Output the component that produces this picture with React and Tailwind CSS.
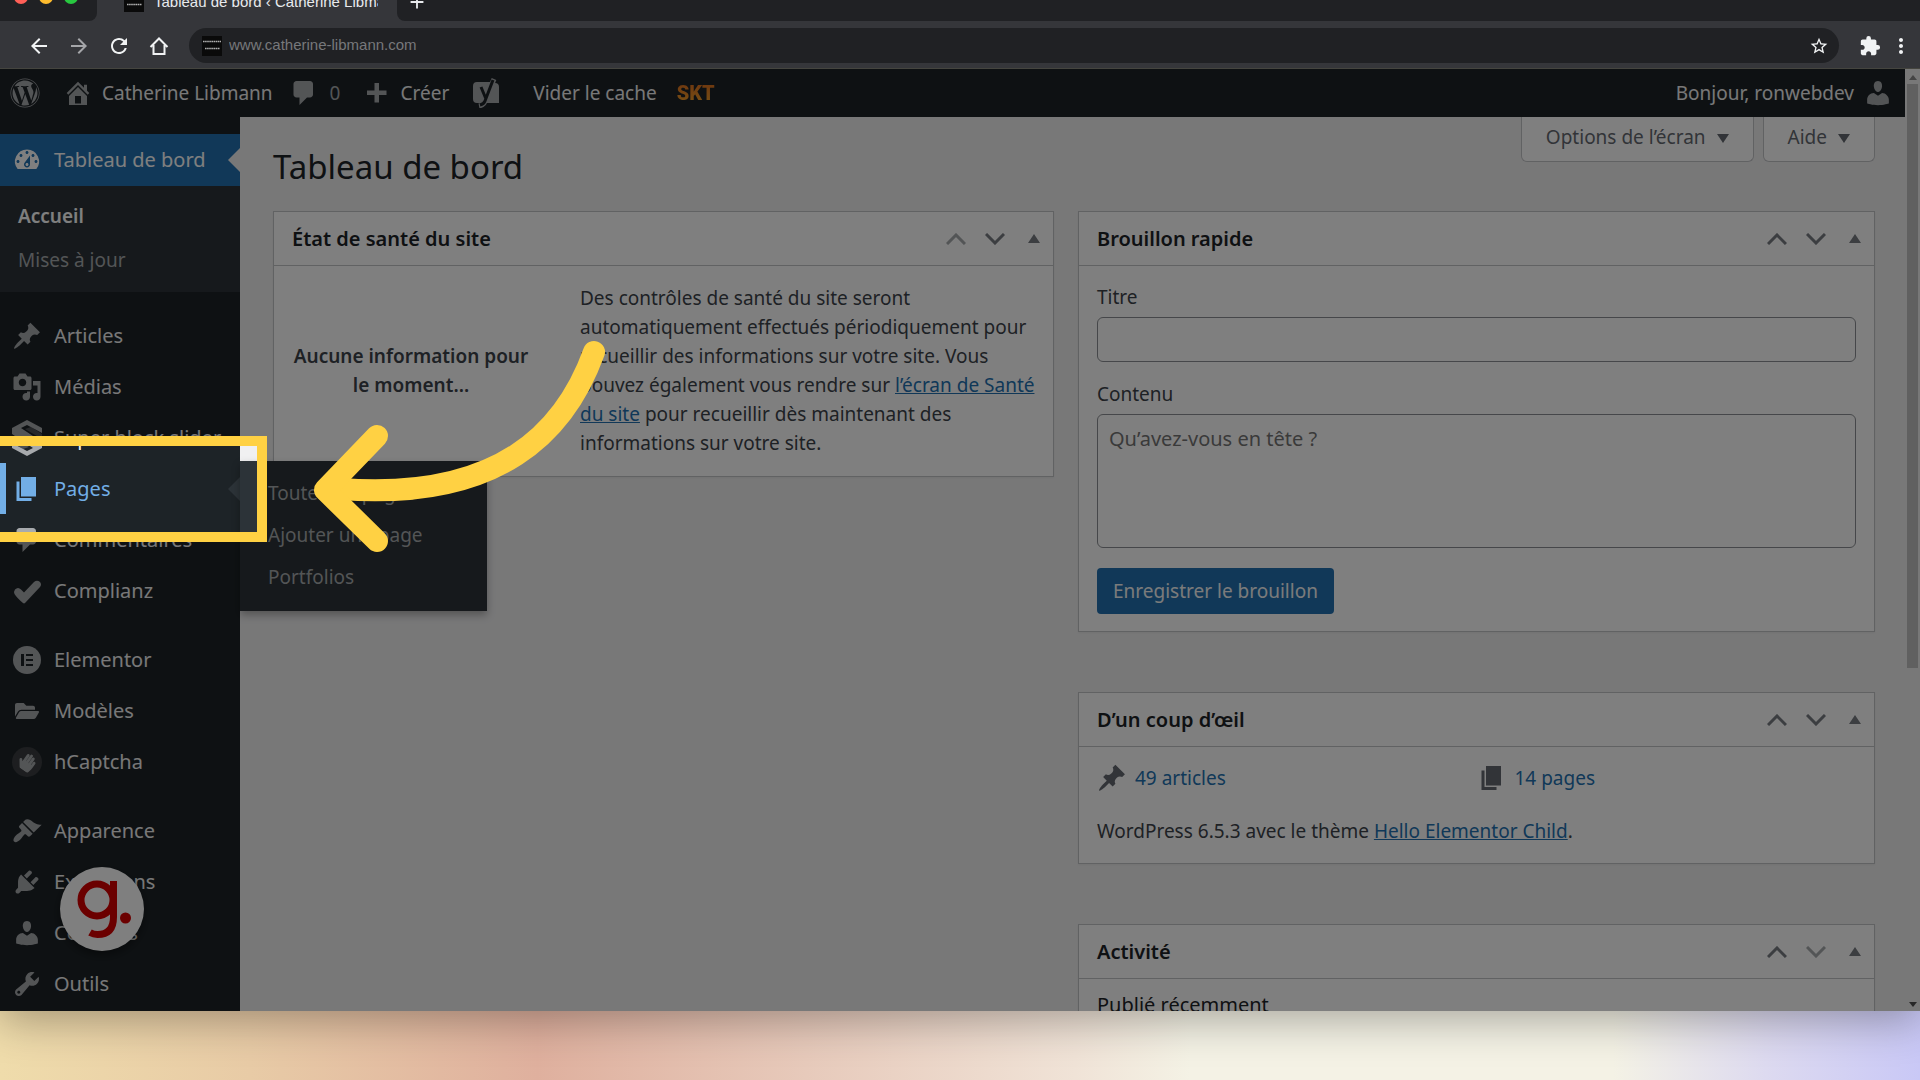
/**
 * App.jsx — WordPress dashboard walkthrough step
 * Browser window with the admin dimmed, one menu entry lit up and an arrow on it.
 */

import {
  MdArrowBack, MdArrowForward, MdRefresh, MdStarOutline, MdExtension, MdMoreVert, MdAdd,
} from "react-icons/md";
import { FaWordpress, FaFolderOpen, FaHandPaper } from "react-icons/fa";

// ─── Icon paths (20x20 grid) ──────────────────────────────────────────────

const PATHS = {
  home: "M16 8.5l1.53 1.53-1.06 1.06L10 4.6l-6.47 6.49-1.06-1.06L10 2.5l4 4v-2h2v4zm-6-2.46l6 5.99V18H4v-5.97zM12 17v-5H8v5h4z",
  comments: "M5 2h9c1.1 0 2 .9 2 2v7c0 1.1-.9 2-2 2h-2l-5 5v-5H5c-1.1 0-2-.9-2-2V4c0-1.1.9-2 2-2z",
  plus: "M17 7v3h-5v5H9v-5H4V7h5V2h3v5h5z",
  dashboard: "M3.76 16h12.48A7.998 7.998 0 0 0 10 3a7.998 7.998 0 0 0-6.24 13zM10 4c.55 0 1 .45 1 1s-.45 1-1 1-1-.45-1-1 .45-1 1-1zM6 6c.55 0 1 .45 1 1s-.45 1-1 1-1-.45-1-1 .45-1 1-1zm8 0c.55 0 1 .45 1 1s-.45 1-1 1-1-.45-1-1 .45-1 1-1zm-5.37 5.55L12 7v6c0 1.1-.9 2-2 2s-2-.9-2-2c0-.57.24-1.08.63-1.45zM4 10c.55 0 1 .45 1 1s-.45 1-1 1-1-.45-1-1 .45-1 1-1zm12 0c.55 0 1 .45 1 1s-.45 1-1 1-1-.45-1-1 .45-1 1-1zm-5 3c0-.55-.45-1-1-1s-1 .45-1 1 .45 1 1 1 1-.45 1-1z",
  post: "M10.44 3.02l1.82-1.82 6.36 6.35-1.83 1.82c-1.05-.68-2.48-.57-3.41.36l-.75.75c-.92.93-1.04 2.35-.35 3.41l-1.83 1.82-2.41-2.41-2.8 2.79c-.42.42-3.38 2.71-3.8 2.29s1.86-3.39 2.28-3.81l2.79-2.79L4.1 9.36l1.83-1.82c1.05.69 2.48.57 3.4-.36l.75-.75c.93-.92 1.05-2.35.36-3.41z",
  media: "M13 11V4c0-.55-.45-1-1-1h-1.67L9 1H5L3.67 3H2c-.55 0-1 .45-1 1v7c0 .55.45 1 1 1h10c.55 0 1-.45 1-1zM7 4.5c1.38 0 2.5 1.12 2.5 2.5S8.38 9.5 7 9.5 4.5 8.38 4.5 7 5.62 4.5 7 4.5zM14 6h5v10.5c0 1.38-1.12 2.5-2.5 2.5S14 17.88 14 16.5s1.12-2.5 2.5-2.5c.17 0 .34.02.5.05V9h-3V6zm-4 8.05V13h2v3.5c0 1.38-1.12 2.5-2.5 2.5S7 17.88 7 16.5 8.12 14 9.5 14c.17 0 .34.02.5.05z",
  page: "M6 15V2h10v13H6zm-1 1h8v2H3V5h2v11z",
  appearance: "M14.48 11.06L7.41 3.99l1.5-1.5c.5-.56 2.3-.47 3.51.32 1.21.8 1.43 1.28 2.91 2.1 1.18.64 2.45 1.26 4.45.85zm-.71.71L6.7 4.7 4.93 6.47c-.39.39-.39 1.02 0 1.41l1.06 1.06c.39.39.39 1.03 0 1.42-.6.6-1.43 1.11-2.21 1.69-.35.26-.7.53-1.01.84C1.43 14.23.4 16.08 1.4 17.07c.99 1 2.84-.03 4.18-1.36.31-.31.58-.66.85-1.02.57-.78 1.08-1.61 1.69-2.21.39-.39 1.02-.39 1.41 0l1.06 1.06c.39.39 1.02.39 1.41 0z",
  plugins: "M13.11 4.36L9.87 7.6 8 5.73l3.24-3.24c.35-.34 1.05-.2 1.56.32.52.51.66 1.21.31 1.55zm-8 1.77l.91-1.12 9.01 9.01-1.19.84c-.71.71-2.63 1.16-3.82 1.16H6.14L4.9 17.26c-.59.59-1.54.59-2.12 0-.59-.58-.59-1.53 0-2.12l1.24-1.24v-3.88c0-1.13.4-3.19 1.09-3.89zm7.26 3.97l3.24-3.24c.34-.35 1.04-.21 1.55.31.52.51.66 1.21.31 1.55l-3.24 3.25z",
  users: "M10 9.25c-2.27 0-2.73-3.44-2.73-3.44C7 4.02 7.82 2 9.97 2c2.16 0 2.98 2.02 2.71 3.81 0 0-.41 3.44-2.68 3.44zm0 2.57L12.72 10c2.39 0 4.52 2.33 4.52 4.53v2.49s-3.65 1.13-7.24 1.13c-3.65 0-7.24-1.13-7.24-1.13v-2.49c0-2.25 1.94-4.48 4.47-4.48z",
  tools: "M16.68 9.77c-1.34 1.34-3.3 1.67-4.95.99l-5.41 6.52c-.99.99-2.59.99-3.58 0s-.99-2.59 0-3.57l6.52-5.42c-.68-1.65-.35-3.61.99-4.95 1.28-1.28 3.12-1.62 4.72-1.06l-2.89 2.89 2.82 2.82 2.86-2.87c.53 1.58.18 3.39-1.08 4.65zM3.81 16.21c.4.39 1.04.39 1.43 0 .4-.4.4-1.04 0-1.43-.39-.4-1.03-.4-1.43 0-.39.39-.39 1.03 0 1.43z",
};

function Dash({ name, className = "size-[30px]" }) {
  return (
    <svg viewBox="0 0 20 20" fill="currentColor" fillRule="evenodd" className={`shrink-0 ${className}`} aria-hidden="true">
      <path d={PATHS[name]} />
    </svg>
  );
}

function BlockSliderIcon() {
  return (
    <svg viewBox="0 0 30 36" className="h-9 w-[30px]" fill="currentColor" aria-hidden="true">
      <path d="M15 0 30 8v5L15 5 9 8l21 14v6l-15 8L0 28v-5l15 8 6-3L0 14V8z" />
      <path d="M13 9l17 10v-5L19 7z" opacity=".35" />
      <path d="M17 27 0 17v5l11 7z" opacity=".35" />
    </svg>
  );
}

function CheckIcon() {
  return (
    <svg viewBox="0 0 30 30" className="size-[30px]" fill="currentColor" aria-hidden="true">
      <path d="M3 13.500q3-3 6 0l3 3L22 6q3-2.500 6 0 2 2.500 0 5L13 27q-1 .8-2 0-6-5-8.500-9-1-2.500.5-4.500z" />
    </svg>
  );
}

function ElementorIcon() {
  return (
    <svg viewBox="0 0 28 28" className="size-7" aria-hidden="true">
      <circle cx="14" cy="14" r="14" fill="currentColor" />
      <path d="M8 8h3v12H8zM13 8h7v2h-7zM13 13h7v2h-7zM13 18h7v2h-7z" fill="#1d2327" />
    </svg>
  );
}

function CaptchaIcon() {
  return (
    <span className="flex size-[30px] items-center justify-center rounded-full bg-[#3a3d40]">
      <FaHandPaper className="size-[18px] rotate-[35deg]" aria-hidden="true" />
    </span>
  );
}

function YoastIcon() {
  return (
    <svg viewBox="0 0 26 30" className="h-[30px] w-[26px]" aria-hidden="true">
      <path d="M4 4h14l-1 1h5a4 4 0 0 1 4 4v16H4a4 4 0 0 1-4-4V8a4 4 0 0 1 4-4z" fill="#a7aaad" />
      <path d="M8 9l5 12M21 1l-9 22q-1 4-6 5" fill="none" stroke="#a7aaad" strokeWidth="5" />
      <path d="M8 9l5 12M20 2l-8 21q-1 3-5 4" fill="none" stroke="#1d2327" strokeWidth="3" />
    </svg>
  );
}

// ─── Browser chrome ───────────────────────────────────────────────────────

function Favicon() {
  return (
    <svg viewBox="0 0 20 20" className="size-5 shrink-0" aria-hidden="true">
      <rect width="20" height="20" fill="#0a0a0a" />
      <path d="M1 5.500h18M3 12.500h15" stroke="#b0b0b0" strokeWidth="1.500" strokeDasharray="1.600 .5" />
    </svg>
  );
}

function TabStrip() {
  return (
    <div className="-mt-[17px] flex h-[38px] bg-[#35363a]">
      <div className="flex w-[97px] items-end gap-[11px] rounded-br-lg bg-[#202124] pb-[17px] pl-[14px]">
        <span className="size-[14px] rounded-full bg-[#ff5f57]" />
        <span className="size-[14px] rounded-full bg-[#febc2e]" />
        <span className="size-[14px] rounded-full bg-[#28c840]" />
      </div>
      <div className="flex w-[300px] items-center gap-2.5 pl-[27px] text-[#e8eaed]">
        <Favicon />
        <span className="w-[224px] overflow-hidden text-[15px] whitespace-nowrap">
          Tableau de bord ‹ Catherine Libmann
        </span>
      </div>
      <div className="flex flex-1 items-center rounded-bl-lg bg-[#202124] pl-[9px] text-[#e8eaed]">
        <button aria-label="Nouvel onglet"><MdAdd className="size-[22px]" /></button>
      </div>
    </div>
  );
}

function Toolbar() {
  return (
    <div className="flex h-12 items-center border-b border-[#45453f] bg-[#35363a] pt-1.5 pb-1 pl-[27px] text-[#f1f3f4]">
      <div className="flex items-center gap-4">
        <button aria-label="Précédent"><MdArrowBack className="size-6" /></button>
        <button aria-label="Suivant" className="text-[#a5a6a9]"><MdArrowForward className="size-6" /></button>
        <button aria-label="Actualiser"><MdRefresh className="size-6" /></button>
        <button aria-label="Accueil">
          <svg viewBox="0 0 24 24" className="size-6" fill="none" stroke="currentColor" strokeWidth="2" aria-hidden="true">
            <path d="M3.500 13 12 4.500 20.500 13M6.500 11v9h11v-9" />
          </svg>
        </button>
      </div>
      <div className="ml-[18px] flex h-[35px] flex-1 items-center rounded-full bg-[#202124] pr-[10px] pl-[13px]">
        <Favicon />
        <input
          aria-label="Adresse"
          defaultValue="www.catherine-libmann.com"
          className="ml-[7px] flex-1 bg-transparent text-[15px] text-[#77787b] outline-none"
        />
        <button aria-label="Favori"><MdStarOutline className="size-5" /></button>
      </div>
      <button aria-label="Extensions" className="ml-5"><MdExtension className="size-[22px]" /></button>
      <button aria-label="Menu" className="mr-[7px] ml-2"><MdMoreVert className="size-6" /></button>
    </div>
  );
}

// ─── Admin bar ────────────────────────────────────────────────────────────

function AdminBar() {
  return (
    <header className="flex h-12 items-center bg-[#1d2327] pr-3 pl-[10px] text-[19px] text-[#f0f0f1]">
      <a href="#wp" aria-label="WordPress"><FaWordpress className="size-[30px] text-[#a7aaad]" /></a>
      <a href="#site" className="ml-[23px] flex items-center gap-[9px]">
        <Dash name="home" className="size-[30px] text-[#a7aaad]" />
        Catherine Libmann
      </a>
      <a href="#comments" className="ml-4 flex items-center gap-[11px] text-[#a7aaad]">
        <Dash name="comments" />
        0
      </a>
      <a href="#new" className="ml-[21px] flex items-center gap-[9px]">
        <Dash name="plus" className="mt-1 size-[30px] text-[#a7aaad]" />
        Créer
      </a>
      <a href="#seo" aria-label="SEO" className="ml-6"><YoastIcon /></a>
      <a href="#cache" className="ml-[34px]">Vider le cache</a>
      <a
        href="#skt"
        className="ml-5 bg-linear-to-b from-[#d9641c] to-[#f0a82c] bg-clip-text font-[Roboto] text-xl font-black text-transparent"
      >
        SKT
      </a>
      <a href="#profile" className="ml-auto flex items-center gap-[9px]">
        Bonjour, ronwebdev
        <Dash name="users" className="size-[30px] text-[#a7aaad]" />
      </a>
    </header>
  );
}

// ─── Sidebar ──────────────────────────────────────────────────────────────

const MENU = [
  [
    { label: "Articles", icon: <Dash name="post" /> },
    { label: "Médias", icon: <Dash name="media" /> },
    { label: "Super block slider", icon: <BlockSliderIcon /> },
    { label: "Pages", icon: <Dash name="page" />, sub: ["Toutes les pages", "Ajouter une page", "Portfolios"] },
    { label: "Commentaires", icon: <Dash name="comments" /> },
    { label: "Complianz", icon: <CheckIcon /> },
  ],
  [
    { label: "Elementor", icon: <ElementorIcon /> },
    { label: "Modèles", icon: <FaFolderOpen className="size-6" /> },
    { label: "hCaptcha", icon: <CaptchaIcon /> },
  ],
  [
    { label: "Apparence", icon: <Dash name="appearance" /> },
    { label: "Extensions", icon: <Dash name="plugins" /> },
    { label: "Comptes", icon: <Dash name="users" /> },
    { label: "Outils", icon: <Dash name="tools" /> },
  ],
];

function MenuItem({ label, icon, sub }) {
  return (
    <li className="relative">
      <a
        href="#menu"
        className={`flex h-[51px] items-center gap-3 pl-3 ${
          sub ? "text-[#72aee6] shadow-[inset_6px_0_0_#72aee6]" : "text-[#f0f0f1]"
        }`}
      >
        <span className={`flex w-[30px] justify-center ${sub ? "" : "text-[#a7aaad]"}`}>{icon}</span>
        <span className="whitespace-nowrap">{label}</span>
      </a>
      {sub && (
        <>
          <span className="absolute top-[14px] right-0 border-y-12 border-r-12 border-y-transparent border-r-[#2c3338]" />
          <ul className="absolute -top-0.5 left-full z-10 w-[247px] bg-[#2c3338] pt-[11px] pb-[13px] text-[19px] text-[#a7aaad] shadow-[0_4px_8px_rgba(0,0,0,0.3)]">
            {sub.map((entry) => (
              <li key={entry}>
                <a href="#sub" className="flex h-[42px] items-center pl-7">{entry}</a>
              </li>
            ))}
          </ul>
        </>
      )}
    </li>
  );
}

function Sidebar() {
  return (
    <nav className="w-60 shrink-0 bg-[#1d2327] pt-[17px] text-xl">
      <div className="relative">
        <a href="#dashboard" className="flex h-[52px] items-center gap-3 bg-[#2271b1] pl-3 text-white">
          <Dash name="dashboard" />
          Tableau de bord
        </a>
        <span className="absolute top-[14px] right-0 border-y-12 border-r-12 border-y-transparent border-r-[#f0f0f1]" />
      </div>
      <div className="flex flex-col bg-[#2c3338] pt-2 pb-[10px] pl-[18px] text-[19px] leading-[44px]">
        <a href="#home" className="font-semibold text-white">Accueil</a>
        <a href="#updates" className="text-[#a7aaad]">Mises à jour</a>
      </div>
      {MENU.map((group, i) => (
        <ul key={i} className="mt-[18px]">
          {group.map((item) => <MenuItem key={item.label} {...item} />)}
        </ul>
      ))}
    </nav>
  );
}

// ─── Dashboard widgets ────────────────────────────────────────────────────

function Chevron({ down, muted }) {
  return (
    <svg
      viewBox="0 0 20 12"
      className={`h-3 w-5 ${muted ? "text-[#a7aaad]" : "text-[#787c82]"} ${down ? "rotate-180" : ""}`}
      fill="none"
      stroke="currentColor"
      strokeWidth="3"
      aria-hidden="true"
    >
      <path d="M1 11l9-9 9 9" />
    </svg>
  );
}

function Card({ title, first, last, children }) {
  return (
    <section className="border border-[#c3c4c7] bg-white shadow-xs">
      <div className="flex h-[54px] items-center border-b border-[#c3c4c7] pl-[18px]">
        <h2 className="flex-1 text-xl font-semibold text-[#1d2327]">{title}</h2>
        <button aria-label={`Monter ${title}`} className="flex w-[39px] justify-center"><Chevron muted={first} /></button>
        <button aria-label={`Descendre ${title}`} className="flex w-[39px] justify-center"><Chevron down muted={last} /></button>
        <button aria-label={`Replier ${title}`} className="flex w-[39px] justify-center">
          <span className="border-x-6 border-b-9 border-x-transparent border-b-[#787c82]" />
        </button>
      </div>
      {children}
    </section>
  );
}

function SiteHealth() {
  return (
    <Card title="État de santé du site" first>
      <div className="grid grid-cols-[238px_1fr] items-center gap-[50px] py-[18px] pr-3 pl-[18px] leading-[29px]">
        <p className="text-center font-semibold">Aucune information pour le moment…</p>
        <p>
          Des contrôles de santé du site seront automatiquement effectués périodiquement pour
          recueillir des informations sur votre site. Vous pouvez également vous rendre sur{" "}
          <a href="#health" className="text-[#2271b1] underline">l’écran de Santé du site</a>{" "}
          pour recueillir dès maintenant des informations sur votre site.
        </p>
      </div>
    </Card>
  );
}

function QuickDraft() {
  return (
    <Card title="Brouillon rapide">
      <form className="flex flex-col px-[18px] pt-[17px] pb-[17px]">
        <label htmlFor="draft-title" className="mb-1.5 leading-7">Titre</label>
        <input id="draft-title" className="h-[45px] rounded-md border border-[#8c8f94] bg-white px-3" />
        <label htmlFor="draft-content" className="mt-[18px] mb-1.5 leading-7">Contenu</label>
        <textarea
          id="draft-content"
          placeholder="Qu’avez-vous en tête ?"
          className="h-[134px] resize-none rounded-md border border-[#8c8f94] bg-white px-[11px] py-2.5 text-xl placeholder:text-[#757575]"
        />
        <button type="button" className="mt-5 h-[46px] self-start rounded-[4px] bg-[#2271b1] px-4 text-[#f6f7f7]">
          Enregistrer le brouillon
        </button>
      </form>
    </Card>
  );
}

function Glance() {
  return (
    <Card title="D’un coup d’œil">
      <div className="px-[18px] pt-4 pb-[17px] leading-[30px]">
        <ul className="mb-[23px] grid grid-cols-2 text-[#2271b1]">
          <li>
            <a href="#posts" className="flex items-center gap-2">
              <Dash name="post" className="size-[30px] text-[#646970]" />49 articles
            </a>
          </li>
          <li>
            <a href="#pages" className="flex items-center gap-2">
              <Dash name="page" className="size-[30px] text-[#646970]" />14 pages
            </a>
          </li>
        </ul>
        <p>
          WordPress 6.5.3 avec le thème{" "}
          <a href="#theme" className="text-[#2271b1] underline">Hello Elementor Child</a>.
        </p>
      </div>
    </Card>
  );
}

function ScreenTab({ children }) {
  return (
    <button className="flex h-[45px] items-center gap-[11px] rounded-b-md border border-t-0 border-[#c3c4c7] bg-white px-6 pb-1 text-[19px] text-[#646970]">
      {children}
      <span className="mt-0.5 border-x-6 border-t-9 border-x-transparent border-t-[#646970]" />
    </button>
  );
}

function Dashboard() {
  return (
    <main className="min-w-0 flex-1 bg-[#f0f0f1] pr-[30px] pl-[33px] text-[19px] text-[#3c434a]">
      <div className="flex h-[94px] items-start justify-between">
        <h1 className="mt-[30px] text-[33px] leading-10 font-normal text-[#1d2327]">Tableau de bord</h1>
        <div className="flex gap-[9px]">
          <ScreenTab>Options de l’écran</ScreenTab>
          <ScreenTab>Aide</ScreenTab>
        </div>
      </div>
      <div className="grid grid-cols-[781fr_797fr] items-start gap-6">
        <SiteHealth />
        <div className="flex flex-col gap-[60px]">
          <QuickDraft />
          <Glance />
          <Card title="Activité" last>
            <h3 className="px-[18px] py-3 text-xl text-[#1d2327]">Publié récemment</h3>
          </Card>
        </div>
      </div>
    </main>
  );
}

function PageScrollbar() {
  return (
    <div className="flex w-[15px] shrink-0 flex-col items-center bg-[#f1f1f1]" aria-hidden="true">
      <span className="mt-1.5 mb-1 border-x-4 border-b-5 border-x-transparent border-b-[#8a8a8a]" />
      <span className="h-[62%] w-[11px] bg-[#c1c1c1]" />
      <span className="mt-auto mb-1 border-x-4 border-t-5 border-x-transparent border-t-[#505050]" />
    </div>
  );
}

// ─── Overlays ─────────────────────────────────────────────────────────────

function Badge() {
  return (
    <div className="absolute top-[798px] left-[60px] size-[84px] rounded-full bg-white shadow-[0_4px_10px_rgba(0,0,0,0.4)]">
      <svg viewBox="0 0 84 84" aria-hidden="true">
        <circle cx="37" cy="33" r="16" fill="none" stroke="#d60000" strokeWidth="7" />
        <path d="M53.500 14v36q0 17.500-16 17.500-4 0-7.500-2" fill="none" stroke="#d60000" strokeWidth="7" />
        <circle cx="65.500" cy="51" r="5.500" fill="#d60000" />
      </svg>
    </div>
  );
}

/* The frame's huge shadow is what dims the rest of the page. */
function Spotlight() {
  return (
    <div className="pointer-events-none absolute top-[367px] -left-[10px] z-20 h-[106px] w-[277px] border-10 border-[#ffd143] shadow-[0_0_0_9999px_rgba(0,0,0,0.5)]" />
  );
}

function Arrow() {
  return (
    <svg
      viewBox="0 0 300 230"
      className="pointer-events-none absolute top-[261px] left-[310px] z-30 h-[230px] w-[300px]"
      fill="none"
      stroke="#ffd143"
      strokeWidth="22"
      strokeLinecap="round"
      strokeLinejoin="round"
      aria-hidden="true"
    >
      <path d="M284 22C255 102 190 171 30 159" />
      <path d="M67 106 15 160l52 51" />
    </svg>
  );
}

export default function App() {
  return (
    <div className="flex h-screen flex-col overflow-hidden bg-[linear-gradient(90deg,#efdcab_0%,#e8cba6_13%,#dfb09e_28%,#e7cabb_42%,#f0e3d7_56%,#f4f2e5_62%,#f4f2e5_84%,#dddaf0_92%,#c9c8f6_100%)] font-['Liberation_Sans',sans-serif]">
      <div className="flex min-h-0 flex-1 flex-col shadow-[0_10px_40px_rgba(0,0,0,0.3)]">
        <TabStrip />
        <Toolbar />
        <div className="relative flex min-h-0 flex-1 overflow-hidden font-['Noto_Sans',sans-serif]">
          <div className="flex min-w-0 flex-1 flex-col">
            <AdminBar />
            <div className="flex min-h-0 flex-1">
              <Sidebar />
              <Dashboard />
            </div>
          </div>
          <PageScrollbar />
          <Badge />
          <Spotlight />
          <Arrow />
        </div>
      </div>
      <div className="h-[69px] shrink-0" />
    </div>
  );
}
